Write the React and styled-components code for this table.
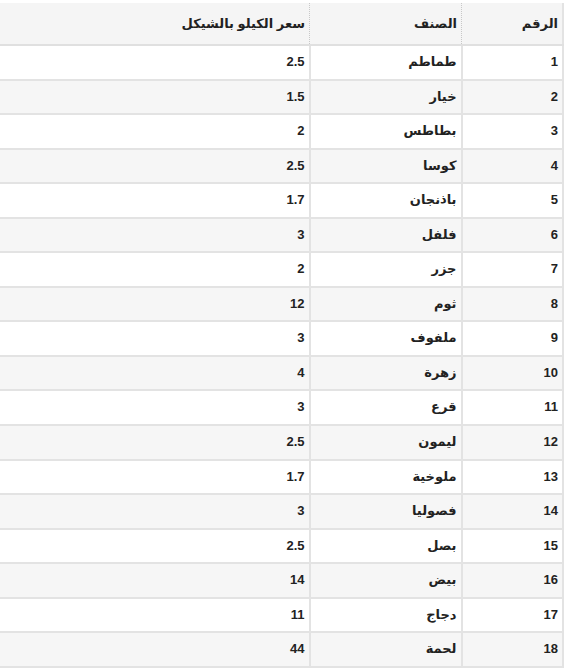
import React from "react";
import styled, { createGlobalStyle } from "styled-components";

const Global = createGlobalStyle`
  html, body {
    margin: 0;
    padding: 0;
    overflow: hidden;
    background: #ffffff;
  }
  body {
    direction: rtl;
    font-family: "Liberation Sans", "DejaVu Sans", Arial, sans-serif;
    color: #222222;
  }
`;

const Page = styled.div`
  padding: 3px 1px 0 0;
`;

const Table = styled.table`
  width: 580px;
  border-collapse: collapse;
  border-spacing: 0;
  font-size: 13px;
  font-weight: bold;
  border-right: 2px solid #e3e3e3;
`;

const HeadCell = styled.th`
  text-align: right;
  padding: 12px 4px 12px 4px;
  line-height: 17px;
  background: #f5f5f5;
  border-bottom: 2px solid #e0e0e0;
  border-left: 1px dotted #c8c8c8;
  width: ${(p) => p.$w || "auto"};
  font-weight: bold;
`;

const Row = styled.tr`
  background: ${(p) => (p.$striped ? "#f6f6f6" : "#ffffff")};
`;

const Cell = styled.td`
  text-align: right;
  padding: 8px 4px 8px 4px;
  line-height: 16.55px;
  border: 2px solid #e3e3e3;
  border-right: none;
`;

const FirstCell = styled(Cell)`
  border-right: 2px solid #e3e3e3;
`;

const data = [
  ["1", "طماطم", "2.5"],
  ["2", "خيار", "1.5"],
  ["3", "بطاطس", "2"],
  ["4", "كوسا", "2.5"],
  ["5", "باذنجان", "1.7"],
  ["6", "فلفل", "3"],
  ["7", "جزر", "2"],
  ["8", "ثوم", "12"],
  ["9", "ملفوف", "3"],
  ["10", "زهرة", "4"],
  ["11", "قرع", "3"],
  ["12", "ليمون", "2.5"],
  ["13", "ملوخية", "1.7"],
  ["14", "فصوليا", "3"],
  ["15", "بصل", "2.5"],
  ["16", "بيض", "14"],
  ["17", "دجاج", "11"],
  ["18", "لحمة", "44"],
];

export default function App() {
  return (
    <Page>
      <Global />
      <Table>
        <thead>
          <tr>
            <HeadCell $w="92px">الرقم</HeadCell>
            <HeadCell $w="143px">الصنف</HeadCell>
            <HeadCell>سعر الكيلو بالشيكل</HeadCell>
          </tr>
        </thead>
        <tbody>
          {data.map((r, i) => (
            <Row key={r[0]} $striped={i % 2 === 1}>
              <FirstCell>{r[0]}</FirstCell>
              <Cell>{r[1]}</Cell>
              <Cell>{r[2]}</Cell>
            </Row>
          ))}
        </tbody>
      </Table>
    </Page>
  );
}
